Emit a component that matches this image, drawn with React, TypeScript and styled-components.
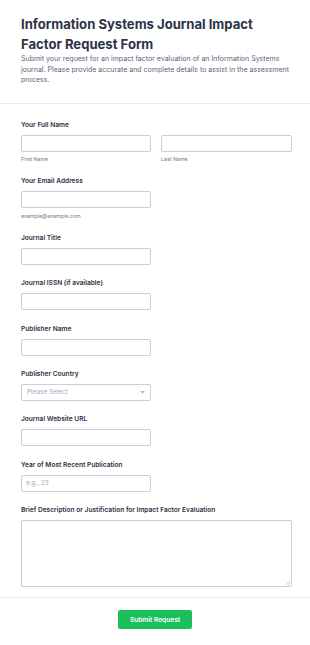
import styled, { createGlobalStyle } from "styled-components";

const GlobalStyle = createGlobalStyle`
  html, body {
    margin: 0;
    padding: 0;
    background: #fff;
  }
  body {
    font-family: Inter, "Liberation Sans", Arial, sans-serif;
    color: #2c3345;
  }
  * {
    box-sizing: border-box;
  }
`;

const Page = styled.div`
  width: 310px;
  min-height: 645px;
  background: #fff;
`;

const Header = styled.header`
  padding: 14px 21px 17px;
  border-bottom: 1px solid #eaebf2;
`;

const Title = styled.h1`
  margin: 0;
  font-size: 13.1px;
  line-height: 20px;
  font-weight: 700;
  color: #2c3345;
`;

const Description = styled.p`
  margin: 0;
  font-size: 7px;
  line-height: 10.5px;
  color: #57647e;
`;

const Fields = styled.div`
  padding: 16px 18px 10px 21px;
  display: flex;
  flex-direction: column;
  gap: 13.3px;
`;

const Field = styled.div`
  display: flex;
  flex-direction: column;
`;

const Label = styled.label`
  font-size: 6.6px;
  line-height: 10px;
  font-weight: 600;
  color: #2c3345;
  margin-bottom: 5px;
`;

const Row = styled.div`
  display: grid;
  grid-template-columns: 130px 131px;
  gap: 10px;
`;

const Sub = styled.div`
  display: flex;
  flex-direction: column;
`;

const Input = styled.input<{ $wide?: boolean }>`
  width: ${(p) => (p.$wide ? "100%" : "130px")};
  height: 17px;
  border: 1px solid #c8ceda;
  border-radius: 2px;
  padding: 0 4px;
  font-family: inherit;
  font-size: 6.4px;
  color: #2c3345;
  background: #fff;
  outline: none;
  &::placeholder {
    color: #a0a9bb;
  }
`;

const SubLabel = styled.span`
  margin-top: 3.5px;
  font-size: 5.3px;
  line-height: 8px;
  color: #6f7a90;
`;

const SelectBox = styled.div`
  width: 130px;
  height: 17px;
  border: 1px solid #c8ceda;
  border-radius: 2px;
  padding: 0 5px;
  display: flex;
  align-items: center;
  justify-content: space-between;
  font-size: 6.4px;
  color: #a0a9bb;
`;

const AreaWrap = styled.div`
  position: relative;
`;

const TextArea = styled.textarea`
  width: 100%;
  height: 67px;
  border: 1px solid #c8ceda;
  border-radius: 2px;
  font-family: inherit;
  font-size: 7px;
  resize: none;
  outline: none;
  display: block;
`;

const Grip = styled.svg`
  position: absolute;
  right: 2px;
  bottom: 2px;
`;

const Footer = styled.div`
  border-top: 1px solid #eaebf2;
  display: flex;
  justify-content: center;
  padding: 12px 0 18px;
`;

const SubmitButton = styled.button`
  width: 74px;
  height: 19.5px;
  border: none;
  border-radius: 2px;
  background: #1bbf5c;
  color: #fff;
  font-family: inherit;
  font-size: 6.6px;
  font-weight: 600;
  cursor: pointer;
`;

const Chevron = () => (
  <svg width="5" height="4" viewBox="0 0 5 4" fill="none">
    <path d="M1 1.2l1.5 1.5 1.5-1.5" stroke="#57647e" strokeWidth="0.9" strokeLinecap="round" strokeLinejoin="round" />
  </svg>
);

export default function App() {
  return (
    <Page>
      <GlobalStyle />
      <Header>
        <Title>Information Systems Journal Impact Factor Request Form</Title>
        <Description>
          Submit your request for an impact factor evaluation of an Information Systems journal. Please
          provide accurate and complete details to assist in the assessment process.
        </Description>
      </Header>
      <Fields>
        <Field>
          <Label>Your Full Name</Label>
          <Row>
            <Sub>
              <Input $wide />
              <SubLabel>First Name</SubLabel>
            </Sub>
            <Sub>
              <Input $wide />
              <SubLabel>Last Name</SubLabel>
            </Sub>
          </Row>
        </Field>
        <Field>
          <Label>Your Email Address</Label>
          <Input />
          <SubLabel>example@example.com</SubLabel>
        </Field>
        <Field>
          <Label>Journal Title</Label>
          <Input />
        </Field>
        <Field>
          <Label>Journal ISSN (if available)</Label>
          <Input />
        </Field>
        <Field>
          <Label>Publisher Name</Label>
          <Input />
        </Field>
        <Field>
          <Label>Publisher Country</Label>
          <SelectBox>
            <span>Please Select</span>
            <Chevron />
          </SelectBox>
        </Field>
        <Field>
          <Label>Journal Website URL</Label>
          <Input />
        </Field>
        <Field>
          <Label>Year of Most Recent Publication</Label>
          <Input placeholder="e.g., 23" />
        </Field>
        <Field>
          <Label>Brief Description or Justification for Impact Factor Evaluation</Label>
          <AreaWrap>
            <TextArea />
            <Grip width="4" height="4" viewBox="0 0 4 4">
              <path d="M4 0L0 4M4 2L2 4" stroke="#b8bfcc" strokeWidth="0.7" />
            </Grip>
          </AreaWrap>
        </Field>
      </Fields>
      <Footer>
        <SubmitButton>Submit Request</SubmitButton>
      </Footer>
    </Page>
  );
}
